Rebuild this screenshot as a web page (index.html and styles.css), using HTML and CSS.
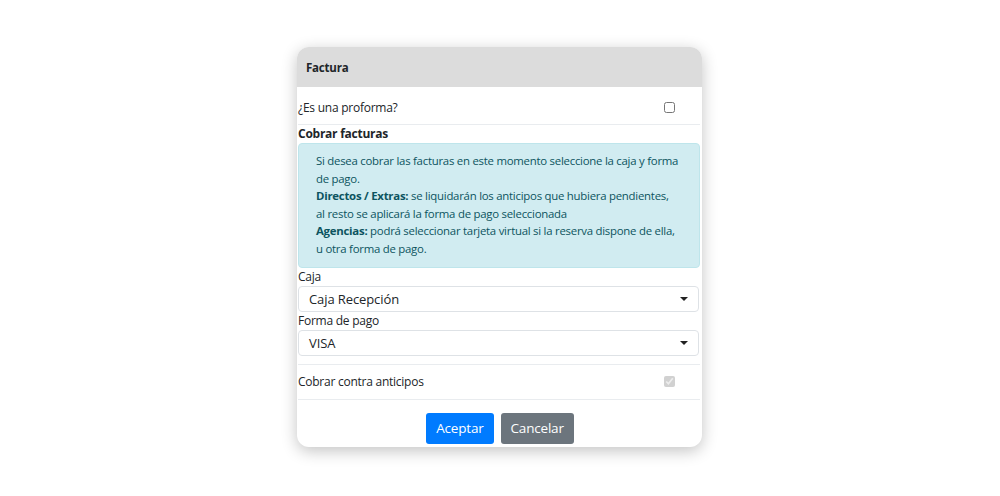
FILE: index.html
```html
<!DOCTYPE html>
<html lang="es">
<head>
<meta charset="utf-8">
<title>Factura</title>
<link rel="stylesheet" href="styles.css">
</head>
<body>
<div class="page">
  <div class="modal">
    <div class="modal-header">Factura</div>
    <div class="modal-body">
      <div class="check-row check-row-top">
        <span class="check-label">¿Es una proforma?</span>
        <span class="check-cell"><input type="checkbox" class="chk"></span>
      </div>
      <div class="section-title">Cobrar facturas</div>
      <div class="alert">
        Si desea cobrar las facturas en este momento seleccione la caja y forma<br>
        de pago.<br>
        <b>Directos / Extras:</b> se liquidarán los anticipos que hubiera pendientes,<br>
        al resto se aplicará la forma de pago seleccionada<br>
        <b>Agencias:</b> podrá seleccionar tarjeta virtual si la reserva dispone de ella,<br>
        u otra forma de pago.
      </div>
      <label class="field-label">Caja</label>
      <div class="select"><span>Caja Recepción</span><span class="caret"></span></div>
      <label class="field-label">Forma de pago</label>
      <div class="select"><span>VISA</span><span class="caret"></span></div>
      <div class="check-row check-row-bottom">
        <span class="check-label">Cobrar contra anticipos</span>
        <span class="check-cell"><input type="checkbox" class="chk" checked disabled></span>
      </div>
    </div>
    <div class="modal-footer">
      <button class="btn btn-primary">Aceptar</button>
      <button class="btn btn-secondary">Cancelar</button>
    </div>
  </div>
</div>
</body>
</html>
```

FILE: styles.css
```css
* { box-sizing: border-box; }
html, body {
  margin: 0;
  padding: 0;
  background: #ffffff;
  font-family: "Open Sans", "Noto Sans", sans-serif;
  color: #212529;
}
.page {
  width: 1000px;
  height: 496px;
  padding-top: 47px;
  display: flex;
  justify-content: center;
}
.modal {
  width: 405px;
  height: 400px;
  margin-left: -1px;
  background: #fff;
  border-radius: 12px;
  box-shadow: 0 4px 16px rgba(0, 0, 0, 0.24);
  overflow: hidden;
  display: flex;
  flex-direction: column;
}
.modal-header {
  height: 40px;
  background: #dcdcdc;
  padding: 0 9px;
  display: flex;
  align-items: center;
  font-weight: 700;
  font-size: 11.5px;
  letter-spacing: -0.2px;
}
.modal-body {
  padding: 0 2px 0 1px;
}
.check-row {
  height: 38px;
  display: flex;
  align-items: center;
  border-bottom: 1px solid #e9ecef;
  font-size: 12px;
  letter-spacing: -0.25px;
}
.check-row-top {
  padding-top: 4px;
}
.check-label { flex: 1; }
.check-cell {
  width: 36px;
  display: flex;
  align-items: center;
}
.chk {
  margin: 0;
  width: 11px;
  height: 11px;
}
.section-title {
  font-weight: 700;
  font-size: 12px;
  letter-spacing: -0.25px;
  height: 18px;
  line-height: 18px;
}
.alert {
  background: #d1ecf1;
  border: 1px solid #bee5eb;
  border-radius: 4px;
  color: #0c5460;
  font-size: 11.4px;
  letter-spacing: -0.25px;
  line-height: 17.6px;
  padding: 8px 8px 9px 17px;
}
.alert b { font-weight: 700; }
.field-label {
  display: block;
  font-size: 12px;
  letter-spacing: -0.25px;
  height: 18px;
  line-height: 18px;
}
.select {
  height: 26px;
  border: 1px solid #dee2e6;
  border-radius: 4px;
  display: flex;
  align-items: center;
  justify-content: space-between;
  padding: 0 10px;
  font-size: 13px;
  letter-spacing: -0.1px;
  margin-right: 1px;
}
.caret {
  width: 0;
  height: 0;
  border-left: 4px solid transparent;
  border-right: 4px solid transparent;
  border-top: 4px solid #222;
}
.check-row-bottom {
  margin-top: 8px;
  height: 36px;
  border-top: 1px solid #e9ecef;
}
.modal-footer {
  flex: 1;
  display: flex;
  justify-content: center;
  gap: 7px;
  padding-top: 13px;
  padding-left: 1px;
}
.btn {
  height: 31px;
  border: none;
  border-radius: 3px;
  color: #fff;
  font-family: inherit;
  font-size: 13.5px;
  letter-spacing: -0.2px;
  padding: 0 10px;
  cursor: pointer;
}
.btn-primary { background: #007bff; }
.btn-secondary { background: #6c757d; }
```
